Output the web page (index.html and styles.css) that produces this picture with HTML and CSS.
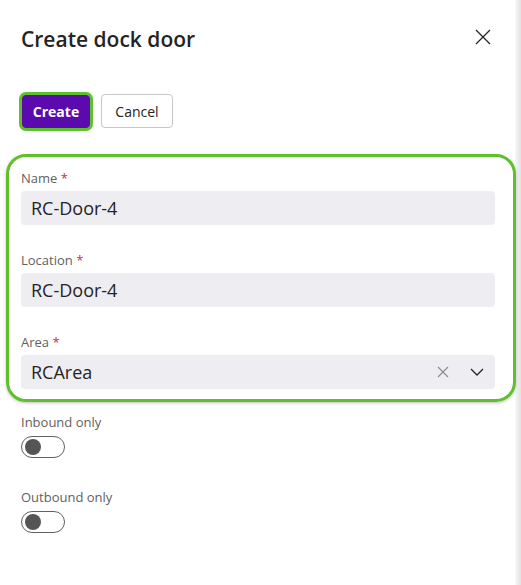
FILE: index.html
```html
<!DOCTYPE html>
<html>
<head>
<meta charset="utf-8">
<link rel="stylesheet" href="styles.css">
</head>
<body>
<div class="panel">
  <div class="header">
    <h1 class="title">Create dock door</h1>
    <button class="close" aria-label="Close">
      <svg width="16" height="16" viewBox="0 0 16 16"><path d="M1 1 L15 15 M15 1 L1 15" stroke="#242424" stroke-width="1.3" fill="none"/></svg>
    </button>
  </div>
  <div class="actions">
    <button class="btn primary">Create</button>
    <button class="btn secondary">Cancel</button>
  </div>
  <div class="highlight">
    <div class="field">
      <label class="label">Name <span class="req">*</span></label>
      <div class="input">RC-Door-4</div>
    </div>
    <div class="field">
      <label class="label">Location <span class="req">*</span></label>
      <div class="input">RC-Door-4</div>
    </div>
    <div class="field">
      <label class="label">Area <span class="req">*</span></label>
      <div class="input combo">
        <span class="value">RCArea</span>
        <svg class="clear" width="12" height="12" viewBox="0 0 12 12"><path d="M1 1 L11 11 M11 1 L1 11" stroke="#8a8a8a" stroke-width="1.1" fill="none"/></svg>
        <svg class="chev" width="14" height="8" viewBox="0 0 14 8"><path d="M1 1 L7 7 L13 1" stroke="#242424" stroke-width="1.3" fill="none"/></svg>
      </div>
    </div>
  </div>
  <div class="toggles">
    <div class="tfield">
      <div class="label">Inbound only</div>
      <div class="toggle"><span class="knob"></span></div>
    </div>
    <div class="tfield">
      <div class="label">Outbound only</div>
      <div class="toggle"><span class="knob"></span></div>
    </div>
  </div>
</div>
</body>
</html>
```

FILE: styles.css
```css
* { box-sizing: border-box; }
html, body { margin: 0; padding: 0; background: #fff; }
body {
  font-family: "Open Sans", "Noto Sans", sans-serif;
  color: #242424;
  width: 521px;
  height: 585px;
  overflow: hidden;
}
.panel {
  width: 521px;
  height: 585px;
  background: linear-gradient(to right, #fff 0, #fff 515px, #f3f3f3 516px, #e2e2e2 521px);
  padding-top: 24px;
}
.header {
  display: flex;
  justify-content: space-between;
  align-items: flex-start;
  padding: 0 30px 0 21px;
}
.title {
  margin: 0;
  font-size: 21px;
  font-weight: 600;
  line-height: 30px;
}
.close {
  background: none;
  border: 0;
  padding: 0;
  margin-top: 5px;
  width: 16px;
  height: 16px;
}
.actions {
  display: flex;
  gap: 8px;
  padding: 0 0 0 22px;
  margin-top: 40px;
  align-items: center;
}
.btn {
  font-family: inherit;
  font-size: 14px;
  height: 33px;
  border-radius: 4px;
  padding: 0 12px;
}
.primary {
  background: #5b0aae;
  color: #fff;
  font-weight: 700;
  border: 1px solid #5b0aae;
  box-shadow: 0 0 0 3px #5ec02c;
  width: 68px;
  padding: 0;
}
.secondary {
  background: #fff;
  color: #242424;
  border: 1px solid #c7c7c7;
  width: 72px;
  height: 34px;
  padding: 0;
  margin-left: 3px;
}
.highlight {
  margin: 26px 5px 0 6px;
  border: 3px solid #5ec02c;
  border-radius: 20px;
  padding: 12px 18px 10px 12px;
  box-shadow: 0 1px 3px rgba(0,0,0,0.25);
  display: flex;
  flex-direction: column;
  gap: 26px;
}
.field { display: flex; flex-direction: column; gap: 4px; }
.label {
  font-size: 13px;
  line-height: 18px;
  color: #616161;
}
.req { color: #c4314b; }
.input {
  height: 34px;
  background: #eeedf2;
  border-radius: 4px;
  font-size: 18px;
  line-height: 34px;
  padding: 0 10px;
  color: #242424;
}
.combo {
  display: flex;
  align-items: center;
}
.combo .value { flex: 1; }
.clear { margin-right: 21px; }
.chev { margin-right: 1px; }
.toggles {
  padding: 11px 0 0 21px;
  display: flex;
  flex-direction: column;
  gap: 30px;
}
.tfield { display: flex; flex-direction: column; gap: 5px; }
.toggle {
  width: 44px;
  height: 22px;
  border: 1px solid #616161;
  border-radius: 11px;
  display: flex;
  align-items: center;
  padding-left: 3px;
}
.knob {
  width: 16px;
  height: 16px;
  border-radius: 50%;
  background: #555;
}
```
